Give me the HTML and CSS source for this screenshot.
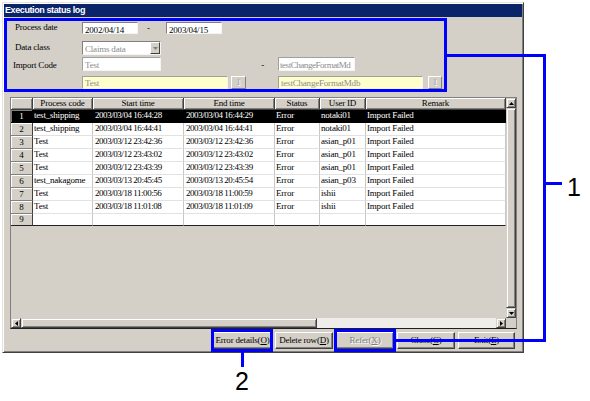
FILE: index.html
```html
<!DOCTYPE html>
<html>
<head>
<meta charset="utf-8">
<title>Execution status log</title>
<link rel="stylesheet" href="styles.css">
</head>
<body>
<div class="stage">
  <div class="window">
    <div class="titlebar">Execution status log</div>
    <div class="form">
      <div class="frow row1">
        <span class="lbl">Process date</span>
        <span class="field w56">2002/04/14</span>
        <span class="dash dash1">-</span>
        <span class="field w56">2003/04/15</span>
      </div>
      <div class="frow row2">
        <span class="lbl">Data class</span>
        <span class="select w79">
          <span class="seltext">Claims data</span>
          <span class="dropbtn"><svg width="5" height="3" viewBox="0 0 5 3"><polygon points="0,0 5,0 2.5,3" fill="#808080"/></svg></span>
        </span>
      </div>
      <div class="frow row3">
        <span class="lbl lbl-ic">Import Code</span>
        <span class="field w79 dis">Test</span>
        <span class="dash dash2">-</span>
        <span class="field w77 dis tight">testChangeFormatMd</span>
      </div>
      <div class="frow row4">
        <span class="lbl"></span>
        <span class="field yellow w146">Test</span>
        <span class="smallbtn sb1">1</span>
        <span class="sp32"></span>
        <span class="field yellow w145">testChangeFormatMdb</span>
        <span class="smallbtn sb2">1</span>
      </div>
    </div>

    <div class="grid">
      <div class="gtop">
        <div class="tablewrap">
          <table class="data">
            <colgroup>
              <col class="c-rh"><col class="c-pc"><col class="c-st"><col class="c-et"><col class="c-ss"><col class="c-ui"><col class="c-rm">
            </colgroup>
            <thead>
              <tr><th></th><th>Process code</th><th>Start time</th><th>End time</th><th>Status</th><th>User ID</th><th>Remark</th></tr>
            </thead>
            <tbody>
              <tr class="sel"><td class="rh">1</td><td>test_shipping</td><td class="dt">2003/03/04 16:44:28</td><td class="dt">2003/03/04 16:44:29</td><td>Error</td><td>notaki01</td><td>Import Failed</td></tr>
              <tr><td class="rh">2</td><td>test_shipping</td><td class="dt">2003/03/04 16:44:41</td><td class="dt">2003/03/04 16:44:41</td><td>Error</td><td>notaki01</td><td>Import Failed</td></tr>
              <tr><td class="rh">3</td><td>Test</td><td class="dt">2003/03/12 23:42:36</td><td class="dt">2003/03/12 23:42:36</td><td>Error</td><td>asian_p01</td><td>Import Failed</td></tr>
              <tr><td class="rh">4</td><td>Test</td><td class="dt">2003/03/12 23:43:02</td><td class="dt">2003/03/12 23:43:02</td><td>Error</td><td>asian_p01</td><td>Import Failed</td></tr>
              <tr><td class="rh">5</td><td>Test</td><td class="dt">2003/03/12 23:43:39</td><td class="dt">2003/03/12 23:43:39</td><td>Error</td><td>asian_p01</td><td>Import Failed</td></tr>
              <tr><td class="rh">6</td><td>test_nakagome</td><td class="dt">2003/03/13 20:45:45</td><td class="dt">2003/03/13 20:45:54</td><td>Error</td><td>asian_p03</td><td>Import Failed</td></tr>
              <tr><td class="rh">7</td><td>Test</td><td class="dt">2003/03/18 11:00:56</td><td class="dt">2003/03/18 11:00:59</td><td>Error</td><td>ishii</td><td>Import Failed</td></tr>
              <tr><td class="rh">8</td><td>Test</td><td class="dt">2003/03/18 11:01:08</td><td class="dt">2003/03/18 11:01:09</td><td>Error</td><td>ishii</td><td>Import Failed</td></tr>
              <tr class="last"><td class="rh">9</td><td></td><td></td><td></td><td></td><td></td><td></td></tr>
            </tbody>
          </table>
        </div>
        <div class="vscroll">
          <div class="sbtn"><svg width="5" height="3" viewBox="0 0 5 3"><polygon points="0,3 5,3 2.5,0" fill="#000"/></svg></div>
          <div class="vthumb"></div>
          <div class="sbtn"><svg width="5" height="3" viewBox="0 0 5 3"><polygon points="0,0 5,0 2.5,3" fill="#000"/></svg></div>
        </div>
      </div>
      <div class="hscroll">
        <div class="sbtn"><svg width="3" height="5" viewBox="0 0 3 5"><polygon points="3,0 3,5 0,2.5" fill="#000"/></svg></div>
        <div class="hthumb"></div>
        <div class="htrack"></div>
        <div class="sbtn"><svg width="3" height="5" viewBox="0 0 3 5"><polygon points="0,0 0,5 3,2.5" fill="#000"/></svg></div>
        <div class="sbcorner"></div>
      </div>
    </div>

    <div class="btnrow">
      <div class="btn w59">Error details(<u>O</u>)</div>
      <div class="btn w58">Delete row(<u>D</u>)</div>
      <div class="btn w58 disabled">Refer(<u>X</u>)</div>
      <div class="btn w58">Close(<u>C</u>)</div>
      <div class="btn w57">Exit(<u>E</u>)</div>
    </div>
  </div>

  <div class="ann-box box1"></div>
  <div class="ann-line l-top"></div>
  <div class="ann-line l-vert"></div>
  <div class="ann-line l-bottom"></div>
  <div class="ann-line l-stub"></div>
  <div class="ann-num n1">1</div>
  <div class="ann-box box2"></div>
  <div class="ann-box box3"></div>
  <div class="ann-line l-two"></div>
  <div class="ann-num n2">2</div>
</div>
</body>
</html>
```

FILE: styles.css
```css
* { box-sizing: border-box; }
html, body { margin: 0; padding: 0; background: #fff; }
body {
  font-family: "Liberation Serif", "Times New Roman", serif;
  font-size: 9px;
  letter-spacing: -0.2px;
  color: #000;
}
.stage { position: relative; width: 590px; height: 401px; overflow: hidden; }

.window {
  margin: 2px 0 0 2px;
  width: 522px;
  height: 351px;
  background: #d4d0c8;
  border: 1px solid;
  border-color: #e4e2dc #404040 #404040 #e4e2dc;
  box-shadow: inset 1px 1px 0 #fff, inset -1px -1px 0 #808080;
  padding: 1px;
  display: flex;
  flex-direction: column;
}
.window > * { flex: none; }

.titlebar {
  height: 13px;
  background: #0a246a;
  color: #fff;
  font-family: "Liberation Sans", Arial, sans-serif;
  font-weight: bold;
  font-size: 9px;
  letter-spacing: -0.4px;
  line-height: 13px;
  padding-left: 1px;
  white-space: nowrap;
}

/* form */
.form { height: 80px; padding: 5px 0 0 11px; }
.frow { display: flex; align-items: flex-start; }
.row1 { height: 12px; }
.row2 { height: 14px; margin-top: 7px; }
.row3 { height: 14px; margin-top: 2px; }
.row4 { height: 13px; margin-top: 5px; }
.lbl { width: 67px; line-height: 12px; white-space: nowrap; flex: none; }
.row1 .lbl { margin-top: -1px; }
.row3 .lbl { margin-top: 2px; margin-left: -2px; width: 69px; }

.field {
  height: 100%;
  flex: none;
  background: #fff;
  border: 1px solid;
  border-color: #808080 #f4f4f4 #f4f4f4 #808080;
  line-height: 12px;
  padding: 1px 0 0 2px;
  white-space: nowrap;
  overflow: hidden;
}
.row4 .field { padding-top: 0; }
.dis { color: #8c8c8c; border-color: #a0a0a0 #f4f4f4 #f4f4f4 #a0a0a0; }
.tight { letter-spacing: -0.45px; padding-left: 1px; }
.yellow { background: #ffffcc; color: #8c8c8c; border-color: #a0a0a0 #f4f4f4 #f4f4f4 #a0a0a0; }
.w56 { width: 56px; }
.w77 { width: 77px; }
.w79 { width: 79px; }
.w145 { width: 145px; }
.w146 { width: 146px; }

.dash { line-height: 12px; flex: none; }
.dash1 { width: 28px; padding-left: 9px; }
.dash2 { width: 117px; text-align: right; padding-right: 14px; margin-top: 2px; }
.sp32 { width: 32px; flex: none; }

.select {
  display: flex;
  height: 14px;
  flex: none;
  background: #fff;
  border: 1px solid;
  border-color: #808080 #f4f4f4 #f4f4f4 #808080;
}
.seltext { flex: 1; color: #8c8c8c; line-height: 12px; padding: 1px 0 0 2px; white-space: nowrap; overflow: hidden; }
.dropbtn {
  width: 10px;
  height: 12px;
  background: #d4d0c8;
  border: 1px solid;
  border-color: #fff #404040 #404040 #fff;
  display: flex;
  align-items: center;
  justify-content: center;
}

.smallbtn {
  height: 13px;
  flex: none;
  background: #d4d0c8;
  border: 1px solid;
  border-color: #fff #808080 #808080 #fff;
  color: #a0a0a0;
  text-shadow: 1px 1px 0 #fff;
  text-align: center;
  line-height: 11px;
}
.sb1 { width: 15px; margin-left: 3px; }
.sb2 { width: 14px; margin-left: 5px; }

/* grid */
.grid {
  margin-left: 6px;
  width: 507px;
  height: 232px;
  border: 1px solid;
  border-color: #808080 #808080 #202020 #808080;
  display: flex;
  flex-direction: column;
}
.gtop { display: flex; height: 220px; }
.tablewrap { width: 495px; background: #d4d0c8; overflow: hidden; }
table.data {
  width: 495px;
  table-layout: fixed;
  border-collapse: separate;
  border-spacing: 0;
}
.c-rh { width: 22px; }
.c-pc { width: 60px; }
.c-st { width: 91px; }
.c-et { width: 91px; }
.c-ss { width: 45px; }
.c-ui { width: 46px; }
.c-rm { width: 140px; }

table.data th, table.data td {
  padding: 0 0 0 1px;
  white-space: nowrap;
  overflow: hidden;
  font-weight: normal;
  text-align: left;
  line-height: 11px;
}
table.data thead tr { height: 12px; }
table.data thead th {
  background: #d4d0c8;
  text-align: center;
  border-right: 1px solid #404040;
  border-bottom: 1px solid #404040;
  box-shadow: inset 1px 1px 0 #fff, inset -1px -1px 0 #808080;
  padding: 0;
}
table.data tbody tr { height: 12.33px; }
table.data tbody td {
  background: #fff;
  border-right: 1px solid #c8c8c8;
  border-bottom: 1px solid #e2e2e2;
  padding-bottom: 1px;
}
table.data tbody td.rh {
  background: #d4d0c8;
  text-align: center;
  padding: 0;
  border-right: 1px solid #404040;
  border-bottom: 1px solid #808080;
  box-shadow: inset 1px 1px 0 #fff;
}
table.data tbody td.dt { letter-spacing: -0.45px; padding-left: 2px; }
table.data tr.sel td { background: #000; color: #fff; border-bottom-color: #000; border-right-color: #000; }
table.data tr.sel td.rh { background: #000; color: #fff; box-shadow: inset 1px 1px 0 #808080; }
table.data tr.last td { border-bottom-color: #202020; }

.vscroll { width: 10px; display: flex; flex-direction: column; }
.sbtn {
  width: 10px;
  height: 10px;
  flex: none;
  background: #d4d0c8;
  border: 1px solid;
  border-color: #d4d0c8 #404040 #404040 #d4d0c8;
  box-shadow: inset 1px 1px 0 #fff, inset -1px -1px 0 #808080;
  display: flex;
  align-items: center;
  justify-content: center;
}
.sbtn svg { display: block; }
.vthumb {
  flex: 1;
  background: #d4d0c8;
  border: 1px solid;
  border-color: #d4d0c8 #404040 #404040 #d4d0c8;
  box-shadow: inset 1px 1px 0 #fff, inset -1px -1px 0 #808080;
}
.hscroll { display: flex; height: 10px; }
.hthumb {
  width: 296px;
  flex: none;
  background: #d4d0c8;
  border: 1px solid;
  border-color: #d4d0c8 #404040 #404040 #d4d0c8;
  box-shadow: inset 1px 1px 0 #fff, inset -1px -1px 0 #808080;
}
.htrack { flex: 1; background: #eeede9; }
.sbcorner { width: 10px; flex: none; background: #d4d0c8; }

/* buttons */
.btnrow {
  display: flex;
  justify-content: flex-end;
  gap: 3px;
  margin-top: 3px;
  padding-right: 7px;
  height: 17px;
}
.btn {
  height: 17px;
  flex: none;
  background: #d4d0c8;
  border: 1px solid;
  border-color: #fff #404040 #404040 #fff;
  box-shadow: inset -1px -1px 0 #808080;
  text-align: center;
  line-height: 15px;
  white-space: nowrap;
}
.btn.disabled { color: #808080; text-shadow: 1px 1px 0 #fff; }
.w57 { width: 57px; }
.w58 { width: 58px; }
.w59 { width: 59px; }

/* annotations (overlay) */
.ann-box { position: absolute; border: 3px solid #0000ff; }
.ann-line { position: absolute; background: #0000ff; }
.ann-num {
  position: absolute;
  font-family: "Liberation Sans", Arial, sans-serif;
  font-size: 25px;
  line-height: 1;
  letter-spacing: 0;
  color: #000;
}
.box1 { left: 4px; top: 18px; width: 443px; height: 74px; }
.l-top { left: 446px; top: 54px; width: 100px; height: 3px; }
.l-vert { left: 543px; top: 54px; width: 3px; height: 288px; }
.l-bottom { left: 395px; top: 339px; width: 151px; height: 3px; }
.l-stub { left: 543px; top: 182px; width: 19px; height: 3px; }
.n1 { left: 567px; top: 175px; }
.box2 { left: 211px; top: 329px; width: 62px; height: 23px; }
.box3 { left: 334px; top: 329px; width: 62px; height: 23px; }
.l-two { left: 241px; top: 351px; width: 3px; height: 16px; }
.n2 { left: 235px; top: 369px; }
```
